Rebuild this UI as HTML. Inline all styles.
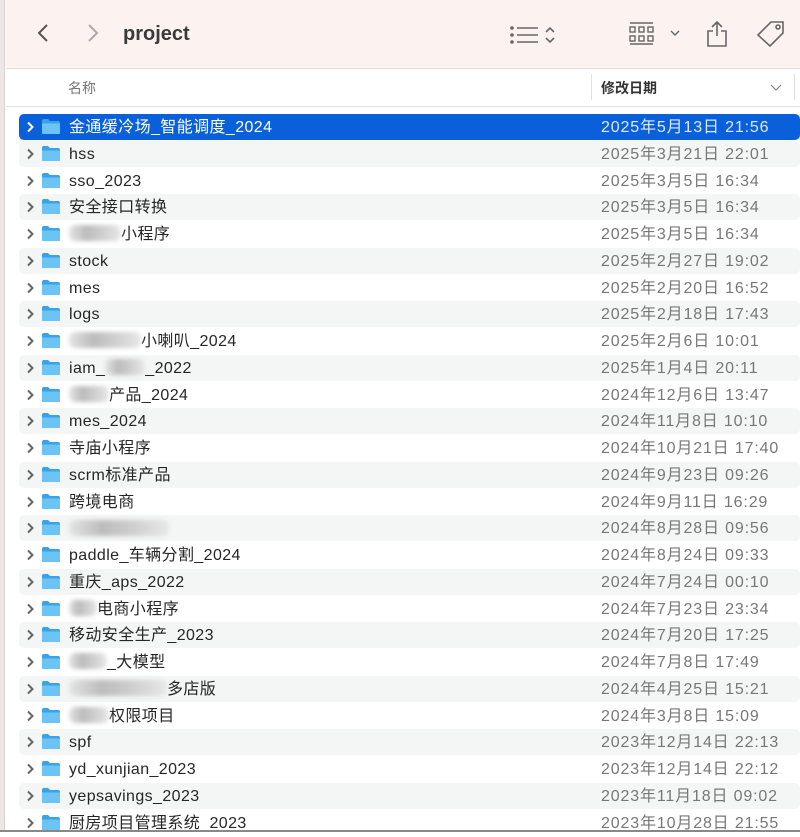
<!DOCTYPE html>
<html><head><meta charset="utf-8"><style>
*{margin:0;padding:0;box-sizing:border-box}
body{width:800px;height:832px;overflow:hidden;background:#fff;font-family:"Liberation Sans","Noto Sans CJK SC",sans-serif;position:relative}
.lb{position:absolute;left:0;top:0;width:5px;height:832px;background:#ece6e4;border-right:1px solid #d8d2d0}
.tb{position:absolute;left:6px;top:0;right:0;height:69px;background:#fcf3f0;border-bottom:1px solid #e4dedc}
.title{position:absolute;left:117px;top:23px;font-size:20px;font-weight:bold;color:#3a3a3a}
.hdr{position:absolute;left:6px;top:70px;right:0;height:37px;background:#fff;border-bottom:1px solid #e2e2e2}
.hdr .n{position:absolute;left:62px;top:8px;font-size:14px;color:#777}
.hdr .d{position:absolute;left:595px;top:8px;font-size:14px;font-weight:bold;color:#333}
.hdr .sep{position:absolute;left:585px;top:4px;width:1px;height:26px;background:#e0e0e0}
.hdr .sep2{position:absolute;left:788px;top:4px;width:1px;height:26px;background:#e0e0e0}
.row{position:absolute;left:19px;width:781px;height:26px;border-radius:5px}
.row.g{background:#f4f5f5}
.row.s{background:#0a60db;border-radius:5px}
.chev{position:absolute;left:7px;top:7px}
.fold{position:absolute;left:22px;top:4px}
.nm,.dt{position:absolute;top:1px;height:26px;line-height:26px;font-size:16px;white-space:nowrap}
.nm{left:50px;color:#262626;letter-spacing:0.4px}
.dt{left:582px;color:#777;letter-spacing:0.85px}
.s .nm{color:#fff}.s .dt{color:#dfe9ff}
.bl{display:inline-block;vertical-align:middle;height:16px;background:linear-gradient(90deg,#e4e4e4,#bcbcbc,#d0d0d0,#e8e8e8);filter:blur(2px);border-radius:6px;margin-top:-3px}
</style></head><body>
<div class="lb"></div>
<div class="tb">
<svg style="position:absolute;left:30px;top:22px" width="14" height="22"><path d="M11 3 L3 11 L11 19" fill="none" stroke="#555" stroke-width="2"/></svg>
<svg style="position:absolute;left:80px;top:22px" width="14" height="22"><path d="M3 3 L11 11 L3 19" fill="none" stroke="#aaa" stroke-width="2"/></svg>
<div class="title">project</div>
<svg style="position:absolute;left:504px;top:24px" width="60" height="22" stroke="#666" stroke-width="1.6" fill="none"><circle cx="2" cy="4" r="1" fill="#666"/><circle cx="2" cy="11" r="1" fill="#666"/><circle cx="2" cy="18" r="1" fill="#666"/><path d="M7 4H28M7 11H28M7 18H28M36 8L40 4L44 8M36 14L40 18L44 14"/></svg>
<svg style="position:absolute;left:623px;top:22px" width="56" height="24" stroke="#666" stroke-width="1.4" fill="none"><path d="M1 1H24"/><rect x="1" y="5" width="5" height="5"/><rect x="10" y="5" width="5" height="5"/><rect x="19" y="5" width="5" height="5"/><rect x="1" y="14" width="5" height="5"/><rect x="10" y="14" width="5" height="5"/><rect x="19" y="14" width="5" height="5"/><path d="M1 22H24M42 9L46 13L50 9"/></svg>
<svg style="position:absolute;left:698px;top:20px" width="26" height="28" stroke="#666" stroke-width="1.6" fill="none"><path d="M13 2V16M8 7L13 2L18 7M9 11H4V26H22V11H17"/></svg>
<svg style="position:absolute;left:748px;top:20px" width="34" height="30" stroke="#666" stroke-width="1.6" fill="none"><path d="M4 15L17 2H29V13L16 26Z"/><circle cx="24" cy="7" r="2"/></svg>
</div>
<div class="hdr"><div class="n">名称</div><div class="sep"></div><div class="d">修改日期</div><div class="sep2"></div>
<svg style="position:absolute;left:764px;top:14px" width="12" height="8"><path d="M1 1L6 6L11 1" fill="none" stroke="#888" stroke-width="1.2"/></svg></div>
<div id="rows"></div>
<script>
var B=function(w){return '<span class="bl" style="width:'+w+'px"></span>'};
var d=[
["金通缓冷场_智能调度_2024","2025年5月13日 21:56"],
["hss","2025年3月21日 22:01"],
["sso_2023","2025年3月5日 16:34"],
["安全接口转换","2025年3月5日 16:34"],
[B(52)+"小程序","2025年3月5日 16:34"],
["stock","2025年2月27日 19:02"],
["mes","2025年2月20日 16:52"],
["logs","2025年2月18日 17:43"],
[B(72)+"小喇叭_2024","2025年2月6日 10:01"],
["iam_"+B(40)+"_2022","2025年1月4日 20:11"],
[B(40)+"产品_2024","2024年12月6日 13:47"],
["mes_2024","2024年11月8日 10:10"],
["寺庙小程序","2024年10月21日 17:40"],
["scrm标准产品","2024年9月23日 09:26"],
["跨境电商","2024年9月11日 16:29"],
[B(100),"2024年8月28日 09:56"],
["paddle_车辆分割_2024","2024年8月24日 09:33"],
["重庆_aps_2022","2024年7月24日 00:10"],
[B(28)+"电商小程序","2024年7月23日 23:34"],
["移动安全生产_2023","2024年7月20日 17:25"],
[B(38)+"_大模型","2024年7月8日 17:49"],
[B(98)+"多店版","2024年4月25日 15:21"],
[B(40)+"权限项目","2024年3月8日 15:09"],
["spf","2023年12月14日 22:13"],
["yd_xunjian_2023","2023年12月14日 22:12"],
["yepsavings_2023","2023年11月18日 09:02"],
["厨房项目管理系统_2023","2023年10月28日 21:55"]];
var h='';
d.forEach(function(r,i){
var c=i==0?'row s':(i%2?'row g':'row');
var cc=i==0?'#fff':'#666';
h+='<div class="'+c+'" style="top:'+(114+i*26.75).toFixed(1)+'px">'+
'<svg class="chev" width="9" height="12"><path d="M2 1.5L6.5 6L2 10.5" fill="none" stroke="'+cc+'" stroke-width="2"/></svg>'+
'<svg class="fold" width="20" height="17"><path d="M1 3Q1 1 3 1H7L9 3H17Q19 3 19 5V15Q19 16 18 16H2Q1 16 1 15Z" fill="#3aa2e6"/><path d="M1 5.5H19V15Q19 16 18 16H2Q1 16 1 15Z" fill="#6cc4f5"/></svg>'+
'<div class="nm">'+r[0]+'</div><div class="dt">'+r[1]+'</div></div>';
});
document.getElementById('rows').innerHTML=h;
</script>
<div style="position:absolute;left:0;top:830px;width:800px;height:2px;background:#888"></div>
</body></html>
